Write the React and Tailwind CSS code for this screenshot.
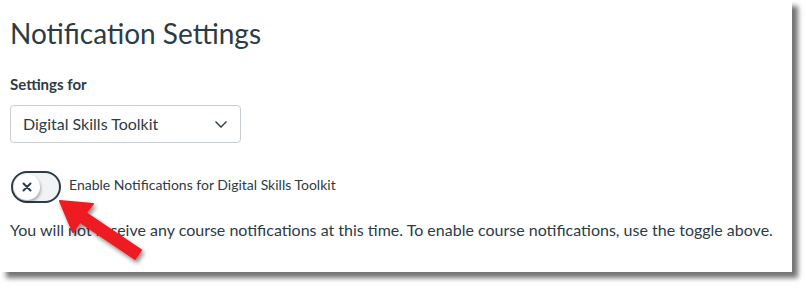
const Chevron = () => (
    <svg width="16" height="16" viewBox="0 0 16 16" fill="none" stroke="#2d3b45" strokeWidth="1.4">
        <path d="M2.5 5.5 L8 11 L13.5 5.5" />
    </svg>
)

const Arrow = () => (
    <svg className="absolute left-0 top-0 pointer-events-none" width="806" height="288" viewBox="0 0 806 288">
        <defs>
            <filter id="sh" x="-20%" y="-20%" width="150%" height="150%">
                <feDropShadow dx="2" dy="3" stdDeviation="2" floodColor="#000" floodOpacity="0.45" />
            </filter>
        </defs>
        <g filter="url(#sh)">
            <path d="M60 201 L93 204 L86 213 L141 250 L135 259 L80 222 L73 232 Z" fill="#ee1c24" strokeLinejoin="round" stroke="#ee1c24" strokeWidth="2" />
        </g>
    </svg>
)

const Toggle = () => (
    <div className="w-[50px] h-[32px] rounded-full border-[2px] border-[#2d3b45] bg-[#f2f3f4] p-[1px] flex items-center">
        <div className="w-[26px] h-[26px] rounded-full bg-white shadow-[1px_2px_3px_rgba(0,0,0,0.3)] flex items-center justify-center text-[#2d3b45]">
            <svg width="10" height="10" viewBox="0 0 10 10" stroke="currentColor" strokeWidth="2" strokeLinecap="round">
                <path d="M1.5 1.5 L8.5 8.5 M8.5 1.5 L1.5 8.5" />
            </svg>
        </div>
    </div>
)

export default function App() {
    return (
        <div className="relative w-[806px] h-[288px] bg-white font-['Lato','Liberation_Sans',sans-serif] text-[#2d3b45]">
            <div className="w-[792px] h-[272px] bg-white shadow-[6px_6px_5px_rgba(0,0,0,0.55)] px-[10px] pt-[15px]">
                <h1 className="text-[28px] leading-[36px] font-normal">Notification Settings</h1>
                <div className="mt-[23px] text-[15px] leading-5 font-bold">Settings for</div>
                <div className="mt-[11px] w-[231px] h-[38px] border border-[#c7cdd1] rounded-[4px] flex items-center justify-between pl-[12px] pr-[11px]">
                    <span className="text-base">Digital Skills Toolkit</span>
                    <Chevron />
                </div>
                <div className="mt-[28px] flex items-center gap-[8px] pl-[1px]">
                    <Toggle />
                    <span className="text-[14px] leading-5 -mt-[4px]">Enable Notifications for Digital Skills Toolkit</span>
                </div>
                <p className="mt-[15px] text-base leading-6">
                    You will not receive any course notifications at this time. To enable course notifications, use the toggle above.
                </p>
            </div>
            <Arrow />
        </div>
    )
}
